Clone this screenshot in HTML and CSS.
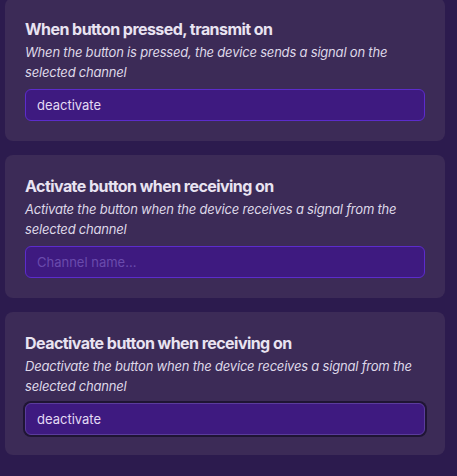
FILE: index.html
```html
<!DOCTYPE html>
<html>
<head>
<meta charset="utf-8">
<link rel="stylesheet" href="styles.css">
</head>
<body>
<div class="list">
  <section class="card first">
    <h2 class="title">When button pressed, transmit on</h2>
    <p class="desc">When the button is pressed, the device sends a signal on the selected channel</p>
    <div class="field"><span class="value">deactivate</span></div>
  </section>
  <section class="card">
    <h2 class="title">Activate button when receiving on</h2>
    <p class="desc">Activate the button when the device receives a signal from the selected channel</p>
    <div class="field"><span class="placeholder">Channel name...</span></div>
  </section>
  <section class="card">
    <h2 class="title">Deactivate button when receiving on</h2>
    <p class="desc">Deactivate the button when the device receives a signal from the selected channel</p>
    <div class="field focused"><span class="value">deactivate</span></div>
  </section>
</div>
</body>
</html>
```
FILE: styles.css
```css
html, body {
  margin: 0;
  padding: 0;
  background: #2c1b4e;
  height: 100%;
  overflow: hidden;
}
body {
  font-family: Inter, "Noto Sans", sans-serif;
}
.list {
  display: flex;
  flex-direction: column;
  gap: 14px;
  padding-left: 5px;
  width: 440px;
}
.card {
  background: #3c2b57;
  border-radius: 8px;
  padding: 21px 20px 20px;
  box-sizing: border-box;
}
.card.first {
  margin-top: -2px;
}
.title {
  margin: 0;
  font-size: 16px;
  line-height: 20px;
  font-weight: 700;
  letter-spacing: -0.55px;
  color: #e9e3f1;
}
.desc {
  margin: 3px 0 0;
  font-size: 13px;
  line-height: 20px;
  font-style: italic;
  letter-spacing: -0.2px;
  color: #ded8e8;
}
.field {
  margin-top: 7px;
  height: 32px;
  box-sizing: border-box;
  background: #3e1a80;
  border: 1px solid #5c2ccc;
  border-radius: 6px;
  padding: 0 11px;
  display: flex;
  align-items: center;
  font-size: 13px;
}
.field.focused {
  border-color: #5b3c9c;
  box-shadow: 0 0 0 2px #1f1534;
}
.value {
  color: #e3daf4;
}
.placeholder {
  color: #6a4bad;
}
```
